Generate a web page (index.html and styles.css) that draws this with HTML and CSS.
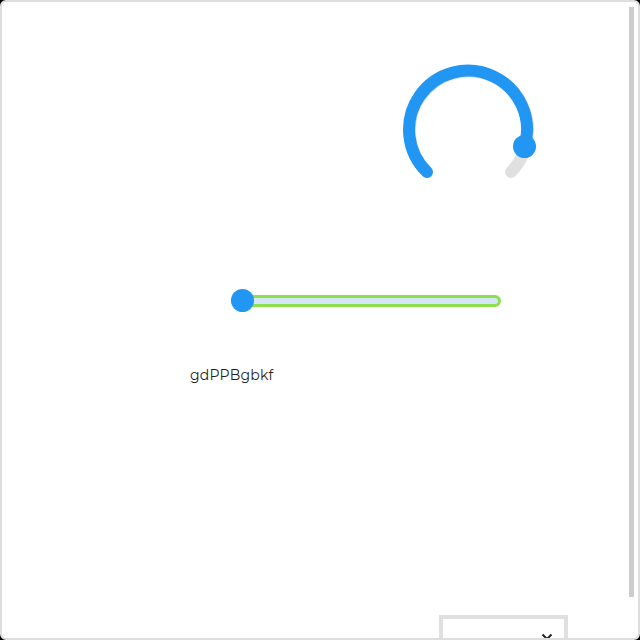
FILE: index.html
```html
<!DOCTYPE html>
<html>
<head>
<meta charset="utf-8">
<link rel="stylesheet" href="styles.css">
</head>
<body>
<div class="frame">
  <div class="knob-row">
    <svg class="knob" width="140" height="140" viewBox="0 0 140 140">
      <path d="M 29 112 A 59 59 0 1 1 113 112" fill="none" stroke="#e0e0e0" stroke-width="12" stroke-linecap="round"/>
      <path d="M 29 112 A 59 59 0 1 1 126.7 86" fill="none" stroke="#2196f3" stroke-width="12" stroke-linecap="round"/>
      <circle cx="126.5" cy="86.5" r="11.5" fill="#2196f3"/>
    </svg>
  </div>
  <div class="slider-row">
    <div class="slider">
      <div class="track"></div>
      <div class="thumb"></div>
    </div>
  </div>
  <div class="label">gdPPBgbkf</div>
  <div class="select-row">
    <div class="select">
      <svg class="chev" width="12" height="8" viewBox="0 0 12 8"><path d="M1.5 1.5 L6 6 L10.5 1.5" fill="none" stroke="#222" stroke-width="2"/></svg>
    </div>
  </div>
  <div class="scrollbar"></div>
</div>
</body>
</html>
```
FILE: styles.css
```css
html, body {
  margin: 0;
  padding: 0;
  background: #000;
}
.frame {
  position: relative;
  width: 640px;
  height: 640px;
  box-sizing: border-box;
  border: 2px solid #dedede;
  border-radius: 6px;
  background: #fff;
  overflow: hidden;
  font-family: "Montserrat", "Lato", "Noto Sans", sans-serif;
}
.knob-row {
  padding: 58px 0 0 396px;
  height: 140px;
}
.knob {
  display: block;
}
.slider-row {
  margin-top: 89px;
  padding-left: 227px;
}
.slider {
  position: relative;
  width: 272px;
  height: 24px;
  display: flex;
  align-items: center;
}
.track {
  margin-left: 2px;
  width: 272px;
  height: 12px;
  box-sizing: border-box;
  border: 3px solid #8ee04a;
  background: #d3e7f9;
  border-radius: 6px;
}
.thumb {
  position: absolute;
  left: 2px;
  top: 0;
  width: 23px;
  height: 23px;
  border-radius: 50%;
  background: #2196f3;
}
.label {
  margin-top: 54px;
  padding-left: 188px;
  font-size: 14px;
  line-height: 16px;
  color: #1e1e1e;
  letter-spacing: 0.2px;
}
.select-row {
  margin-top: 232px;
  padding-left: 437px;
}
.select {
  position: relative;
  width: 129px;
  height: 40px;
  box-sizing: border-box;
  border: 4px solid #e0e0e0;
  background: #fff;
}
.chev {
  position: absolute;
  left: 98px;
  top: 14px;
}
.scrollbar {
  position: absolute;
  right: 4px;
  top: 5px;
  width: 5px;
  height: 590px;
  background: #cdcdcd;
}
```
